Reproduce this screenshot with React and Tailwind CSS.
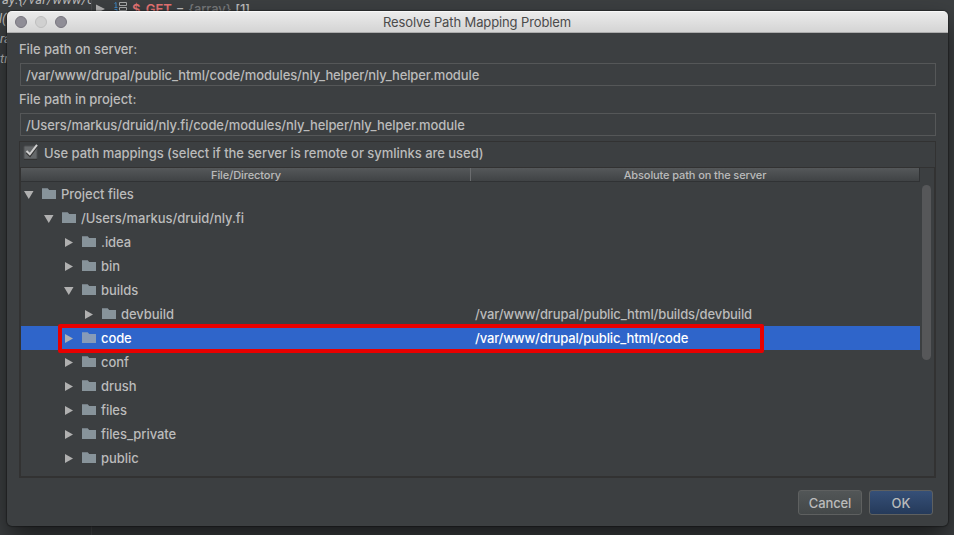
const FILES = [
  { name: "Project files", depth: 0, open: true },
  { name: "/Users/markus/druid/nly.fi", depth: 1, open: true },
  { name: ".idea", depth: 2 },
  { name: "bin", depth: 2 },
  { name: "builds", depth: 2, open: true },
  { name: "devbuild", depth: 3, path: "/var/www/drupal/public_html/builds/devbuild" },
  { name: "code", depth: 2, path: "/var/www/drupal/public_html/code", selected: true },
  { name: "conf", depth: 2 },
  { name: "drush", depth: 2 },
  { name: "files", depth: 2 },
  { name: "files_private", depth: 2 },
  { name: "public", depth: 2 },
];

const INDENT = ["pl-[2px]", "pl-[22px]", "pl-[42px]", "pl-[62px]"];

function Arrow({ open }) {
  return (
    <svg width="12" height="12" viewBox="0 0 12 12" className="shrink-0 fill-[#b0b0b0]">
      {open ? <path d="M1 3h9.5L5.75 11z" /> : <path d="M2 2v9L10 6.5z" />}
    </svg>
  );
}

function Folder({ selected }) {
  return (
    <svg
      width="14"
      height="12"
      viewBox="0 0 14 12"
      className={`ml-[7px] mr-[5px] shrink-0 ${selected ? "fill-[#879bb8]" : "fill-[#87939a]"}`}
    >
      <path d="M0 0.2h5.7L7.2 2H14V11H0z" />
    </svg>
  );
}

function Row({ file }) {
  return (
    <div
      className={`flex h-6 w-[899px] shrink-0 items-center ${INDENT[file.depth]} ${
        file.selected ? "bg-[#2f65ca] text-white" : ""
      } relative`}
    >
      <Arrow open={file.open} />
      <Folder selected={file.selected} />
      <span className={file.selected ? "font-medium tracking-[-0.1px]" : "tracking-[-0.05px]"}>{file.name}</span>
      {file.path && (
        <span className={`absolute left-[454px] top-1 ${file.selected ? "font-medium tracking-[-0.15px]" : "tracking-[-0.13px]"}`}>
          {file.path}
        </span>
      )}
      {file.selected && (
        <div className="absolute -top-[2px] left-[37px] z-10 h-[29px] w-[706px] rounded-[2px] border-4 border-[#e80000]" />
      )}
    </div>
  );
}

function Field({ children, className }) {
  return (
    <div className={`ml-px flex h-[23px] w-[916px] items-center border border-[#555758] pl-[5px] ${className}`}>
      {children}
    </div>
  );
}

function Editor() {
  return (
    <div className="absolute inset-0 flex bg-[#3c3f41] text-[13px] text-[#bbb]">
      <div className="relative w-[92px] shrink-0 overflow-hidden border-r border-[#4a4c4e] font-['Roboto',sans-serif] italic">
        <span className="absolute -top-[8px] left-[2px] whitespace-nowrap tracking-[0.3px]">ay:{"{"}/var/www/c</span>
        <span className="absolute -left-px top-[11px]">l(</span>
        <span className="absolute left-0 top-[31px]">ra</span>
        <span className="absolute left-0 top-[51px]">tr</span>
      </div>
      <div className="relative -top-px flex h-5 items-center pl-[3px] tracking-[-0.1px]">
        <svg width="12" height="12" viewBox="0 0 12 12" className="fill-[#b0b0b0]">
          <path d="M1 1.5v9L10 6z" />
        </svg>
        <svg width="15" height="16" viewBox="0 0 15 16" className="ml-[7px] mr-[3px]">
          <path d="M0.5 2.5L2 1.5V6M0.5 6.5H3.5M0.5 8.5h2.5v2L0.5 12.5h3" fill="none" stroke="#3e86c0" />
          <path d="M5.5 1.5h7v3h-7zM5.5 6.5h7v3h-7zM5.5 11.5h7" fill="none" stroke="#a8aaab" />
        </svg>
        <span className="font-semibold text-[#e57373]">$_GET</span>
        <span className="ml-1">=</span>
        <span className="ml-1 text-[#77797b]">{"{array}"}</span>
        <span className="ml-1">[1]</span>
      </div>
    </div>
  );
}

export default function App() {
  return (
    <div className="relative h-[535px] w-[954px] overflow-hidden font-['Inter','Liberation_Sans',sans-serif] text-[13px] font-[450] leading-4 text-[#bbbbbb]">
      <Editor />
      <div className="absolute left-[7px] top-[11px] flex h-[515px] w-[941px] flex-col overflow-hidden rounded-[5px] bg-[#3c3f41] shadow-[0_0_1px_1px_rgba(0,0,0,0.3),0_14px_28px_rgba(0,0,0,0.55)]">
        <header className="flex h-[22px] shrink-0 items-center border-b border-t border-b-[#acacac] border-t-[#f8f8f8] bg-gradient-to-b from-[#ebebeb] to-[#d4d4d4] font-normal text-[#4b4b4b]">
          <div className="flex w-[100px] gap-2 pl-2">
            <span className="size-3 rounded-full border border-[#77757e] bg-[#8f8d96]" />
            <span className="size-3 rounded-full border border-[#bebebe] bg-[#d0d0d0]" />
            <span className="size-3 rounded-full border border-[#77757e] bg-[#8f8d96]" />
          </div>
          <div className="flex-1 pr-[101px] text-center">
            <span className="tracking-[-0.12px]">Resolve Path Mapping Problem</span>
          </div>
        </header>

        <main className="flex flex-col pl-3 pt-2">
          <label className="mb-[6px] h-4 tracking-[-0.06px]">File path on server:</label>
          <Field className="tracking-[-0.12px]">/var/www/drupal/public_html/code/modules/nly_helper/nly_helper.module</Field>
          <label className="mb-[6px] mt-[5px] h-4 tracking-[-0.06px]">File path in project:</label>
          <Field className="tracking-[-0.07px]">/Users/markus/druid/nly.fi/code/modules/nly_helper/nly_helper.module</Field>

          <section className="mt-[5px] flex h-[337px] w-[917px] flex-col border border-[#323232]">
            <div className="flex h-[25px] shrink-0 items-start pl-[3px] pt-[3px]">
              <svg width="16" height="17" viewBox="0 0 16 17" className="mr-[5px] -mt-[2px]">
                <rect x="1" y="3" width="13" height="13" rx="1" fill="#65686a" stroke="#4c4e50" />
                <path d="M1 16.5h13" stroke="#333" />
                <path d="M3.5 9.5L7 13L14 3.5" fill="none" stroke="#333" strokeWidth="2" />
                <path d="M3.5 8L6.8 11.3L14 1.8" fill="none" stroke="#cfcfcf" strokeWidth="2" />
              </svg>
              <span className="tracking-[-0.03px]">Use path mappings (select if the server is remote or symlinks are used)</span>
            </div>
            <div className="flex min-h-0 flex-1 border-b border-r border-t border-[#323232]">
              <div className="flex w-[900px] flex-col border-l border-[#323232]">
                <div className="flex h-[14px] shrink-0 border-b border-r border-[#303234] bg-gradient-to-b from-[#55585a] to-[#404345] text-[11px] leading-[14px]">
                  <div className="w-[450px] border-r border-[#6a6c6e] pl-px text-center tracking-[-0.08px]">File/Directory</div>
                  <div className="flex-1 text-center tracking-[-0.11px]">Absolute path on the server</div>
                </div>
                {FILES.map((file) => (
                  <Row key={file.name} file={file} />
                ))}
              </div>
              <div className="flex-1 pl-[2px] pt-[17px]">
                <div className="h-[175px] w-[9px] rounded-full bg-[#565759]" />
              </div>
            </div>
          </section>

          <footer className="mt-3 flex gap-[7px] pl-[779px] text-[#bbbbbb]">
            <button className="h-[25px] w-16 rounded-[3px] border border-[#5e6060] bg-gradient-to-b from-[#525657] to-[#444849] tracking-[-0.1px]">
              Cancel
            </button>
            <button className="h-[25px] w-16 rounded-[3px] border border-[#5e6060] bg-gradient-to-b from-[#365078] to-[#253a5a]">
              OK
            </button>
          </footer>
        </main>
      </div>
    </div>
  );
}
